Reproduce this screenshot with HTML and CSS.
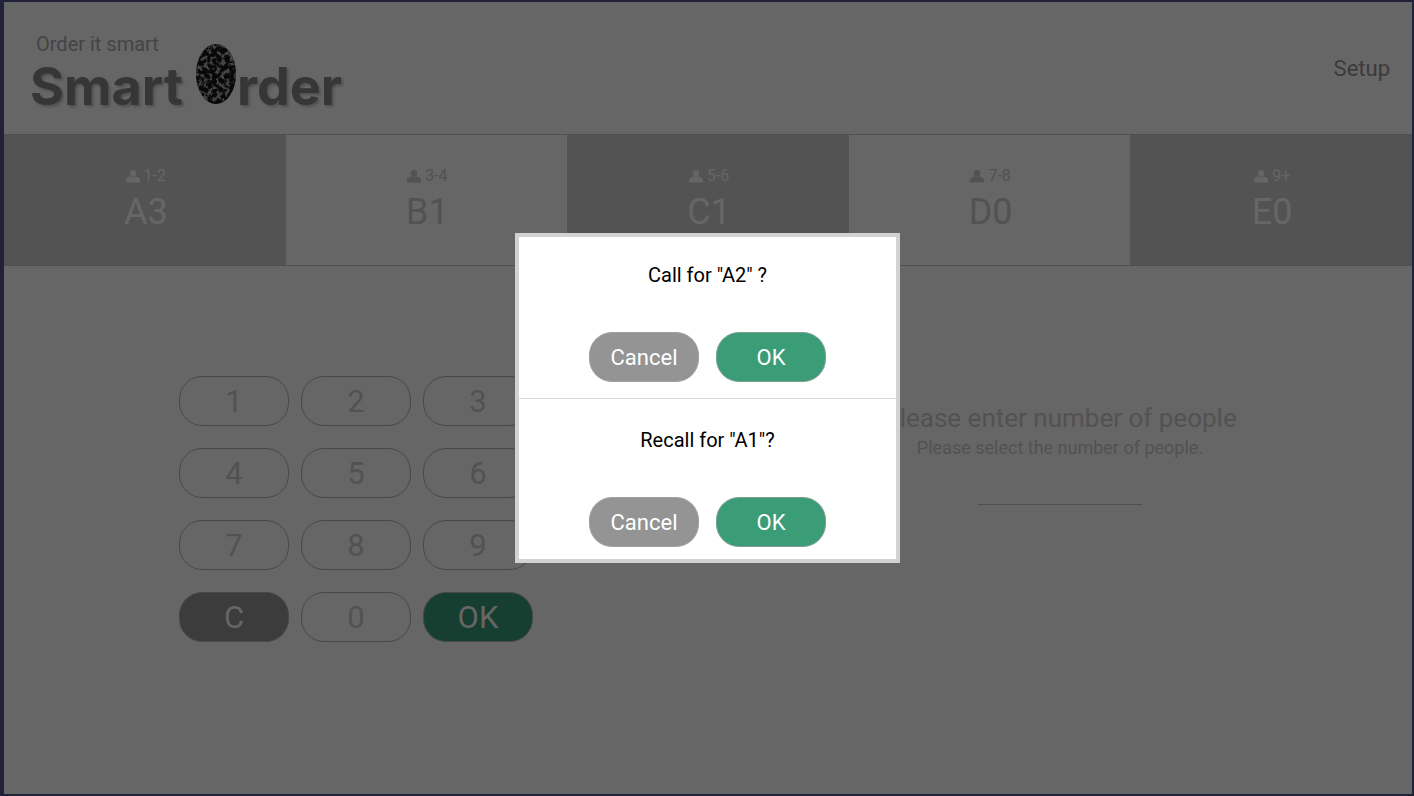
FILE: index.html
```html
<!DOCTYPE html>
<html lang="en">
<head>
<meta charset="utf-8">
<title>Smart Order</title>
<link rel="stylesheet" href="styles.css">
</head>
<body>
<svg class="defs" aria-hidden="true">
  <symbol id="person" viewBox="0 0 14 13"><circle cx="7" cy="3.2" r="3.2"/><path d="M0 12.500V10C0 8 2.300 7 4.600 6.200Q7 7.600 9.400 6.200C11.700 7 14 8 14 10V12.500Z"/></symbol>
</svg>
<div class="screen">
  <header class="header">
    <svg class="logo" width="324" height="82" viewBox="0 0 324 82" role="img" aria-label="Smart Order">
      <defs>
        <filter id="grain" x="0" y="0" width="1" height="1" color-interpolation-filters="sRGB">
          <feTurbulence type="fractalNoise" baseFrequency="0.23" numOctaves="4" seed="21"/>
          <feColorMatrix values="0 0 0 0 0.27  0 0 0 0 0.27  0 0 0 0 0.27  5 0 0 0 -2.3"/>
          <feComposite in2="SourceGraphic" operator="in"/>
        </filter>
      </defs>
      <text class="tagline" x="6" y="20">Order it smart</text>
      <text class="wordmark" x="0" y="74">Smart</text>
      <ellipse cx="186" cy="43" rx="20" ry="30" fill="#080808"/>
      <ellipse cx="186" cy="43" rx="20" ry="30" filter="url(#grain)"/>
      <text class="wordmark" x="207" y="74">rder</text>
    </svg>
    <a class="setup" href="#">Setup</a>
  </header>
  <nav class="tabs">
    <button class="tab dark"><span class="size"><svg class="icon"><use href="#person"/></svg>1-2</span><span class="code">A3</span></button>
    <button class="tab"><span class="size"><svg class="icon"><use href="#person"/></svg>3-4</span><span class="code">B1</span></button>
    <button class="tab dark"><span class="size"><svg class="icon"><use href="#person"/></svg>5-6</span><span class="code">C1</span></button>
    <button class="tab"><span class="size"><svg class="icon"><use href="#person"/></svg>7-8</span><span class="code">D0</span></button>
    <button class="tab dark"><span class="size"><svg class="icon"><use href="#person"/></svg>9+</span><span class="code">E0</span></button>
  </nav>
  <main class="main">
    <section class="keypad">
      <button class="key">1</button><button class="key">2</button><button class="key">3</button>
      <button class="key">4</button><button class="key">5</button><button class="key">6</button>
      <button class="key">7</button><button class="key">8</button><button class="key">9</button>
      <button class="key clear">C</button><button class="key">0</button><button class="key confirm">OK</button>
    </section>
    <section class="prompt">
      <label class="title" for="people">Please enter number of people</label>
      <p class="hint">Please select the number of people.</p>
      <input class="people" id="people" type="text">
    </section>
  </main>
  <div class="overlay">
    <div class="dialog" role="dialog" aria-label="Call">
      <section class="ask">
        <p class="question">Call for "A2" ?</p>
        <div class="actions"><button class="pill">Cancel</button><button class="pill ok">OK</button></div>
      </section>
      <section class="ask">
        <p class="question">Recall for "A1"?</p>
        <div class="actions"><button class="pill">Cancel</button><button class="pill ok">OK</button></div>
      </section>
    </div>
  </div>
</div>
</body>
</html>
```
FILE: styles.css
```css
* { box-sizing: border-box; }
body { margin: 0; font-family: Roboto, "Liberation Sans", sans-serif; }
button, input { font-family: inherit; }
.defs { display: none; }
.screen {
  position: relative;
  display: flex;
  flex-direction: column;
  min-height: 100vh;
  background: #666;
  border: 2px solid #21213a;
  border-left-width: 4px;
}
.header {
  display: flex;
  align-items: center;
  justify-content: space-between;
  height: 132px;
  padding: 0 22px 0 26px;
}
.logo { margin-top: 8px; overflow: visible; }
.tagline { font-size: 20px; fill: #444; }
.wordmark {
  font: bold 52px Inter, sans-serif;
  fill: #363636;
  filter: drop-shadow(2px 2px 1px #505050);
}
.setup { font-size: 22px; color: #3b3b3b; text-decoration: none; }
.tabs { display: grid; grid-template-columns: repeat(5, 1fr); }
.tab {
  display: flex;
  flex-direction: column;
  align-items: center;
  justify-content: center;
  gap: 4px;
  height: 132px;
  padding: 0 0 0 2px;
  border: solid #505050;
  border-width: 1px 0;
  background: #666;
  color: #525252;
}
.dark { background: #535353; color: #666; }
.size { display: flex; align-items: center; gap: 4px; font-size: 16px; line-height: 20px; }
.icon { width: 14px; height: 13px; fill: currentColor; }
.code { font-size: 36px; line-height: 44px; }
.main { display: grid; grid-template-columns: 1fr 1fr; flex: 1; }
.keypad {
  display: grid;
  grid-template-columns: repeat(3, 110px);
  grid-auto-rows: 50px;
  gap: 22px 12px;
  align-content: start;
  justify-content: center;
  padding-top: 110px;
}
.key {
  padding: 0;
  border: 1px solid #484848;
  border-radius: 23px;
  background: none;
  color: #525252;
  font-size: 31px;
}
.clear { background: #3c3c3c; color: #666; }
.confirm { background: #173f31; color: #666; }
.prompt {
  display: flex;
  flex-direction: column;
  align-items: center;
  padding-top: 134px;
  color: #525252;
}
.title { font-size: 26px; line-height: 36px; }
.hint { margin: 0; font-size: 18px; line-height: 24px; }
.people {
  width: 164px;
  height: 45px;
  border: 0;
  border-bottom: 1px solid #505050;
  background: none;
  text-align: center;
  font-size: 26px;
}
.overlay {
  position: absolute;
  inset: 0;
  display: flex;
  align-items: center;
  justify-content: center;
  padding-right: 1px;
}
.dialog { width: 385px; border: 4px solid #d2d2d2; background: #fff; }
.ask {
  display: flex;
  flex-direction: column;
  align-items: center;
  gap: 44px;
  padding: 25px 0 16px;
}
.ask + .ask { border-top: 1px solid #d8d8d8; padding: 28px 0 12px; }
.question { margin: 0; font-size: 20px; line-height: 26px; color: #000; }
.actions { display: flex; gap: 17px; }
.pill {
  width: 110px;
  height: 50px;
  padding: 0;
  border: 1px solid #a0a0a0;
  border-radius: 23px;
  background: #949494;
  color: #fff;
  font-size: 22px;
}
.ok { background: #3a9d78; border-color: #7f9e92; }
```
